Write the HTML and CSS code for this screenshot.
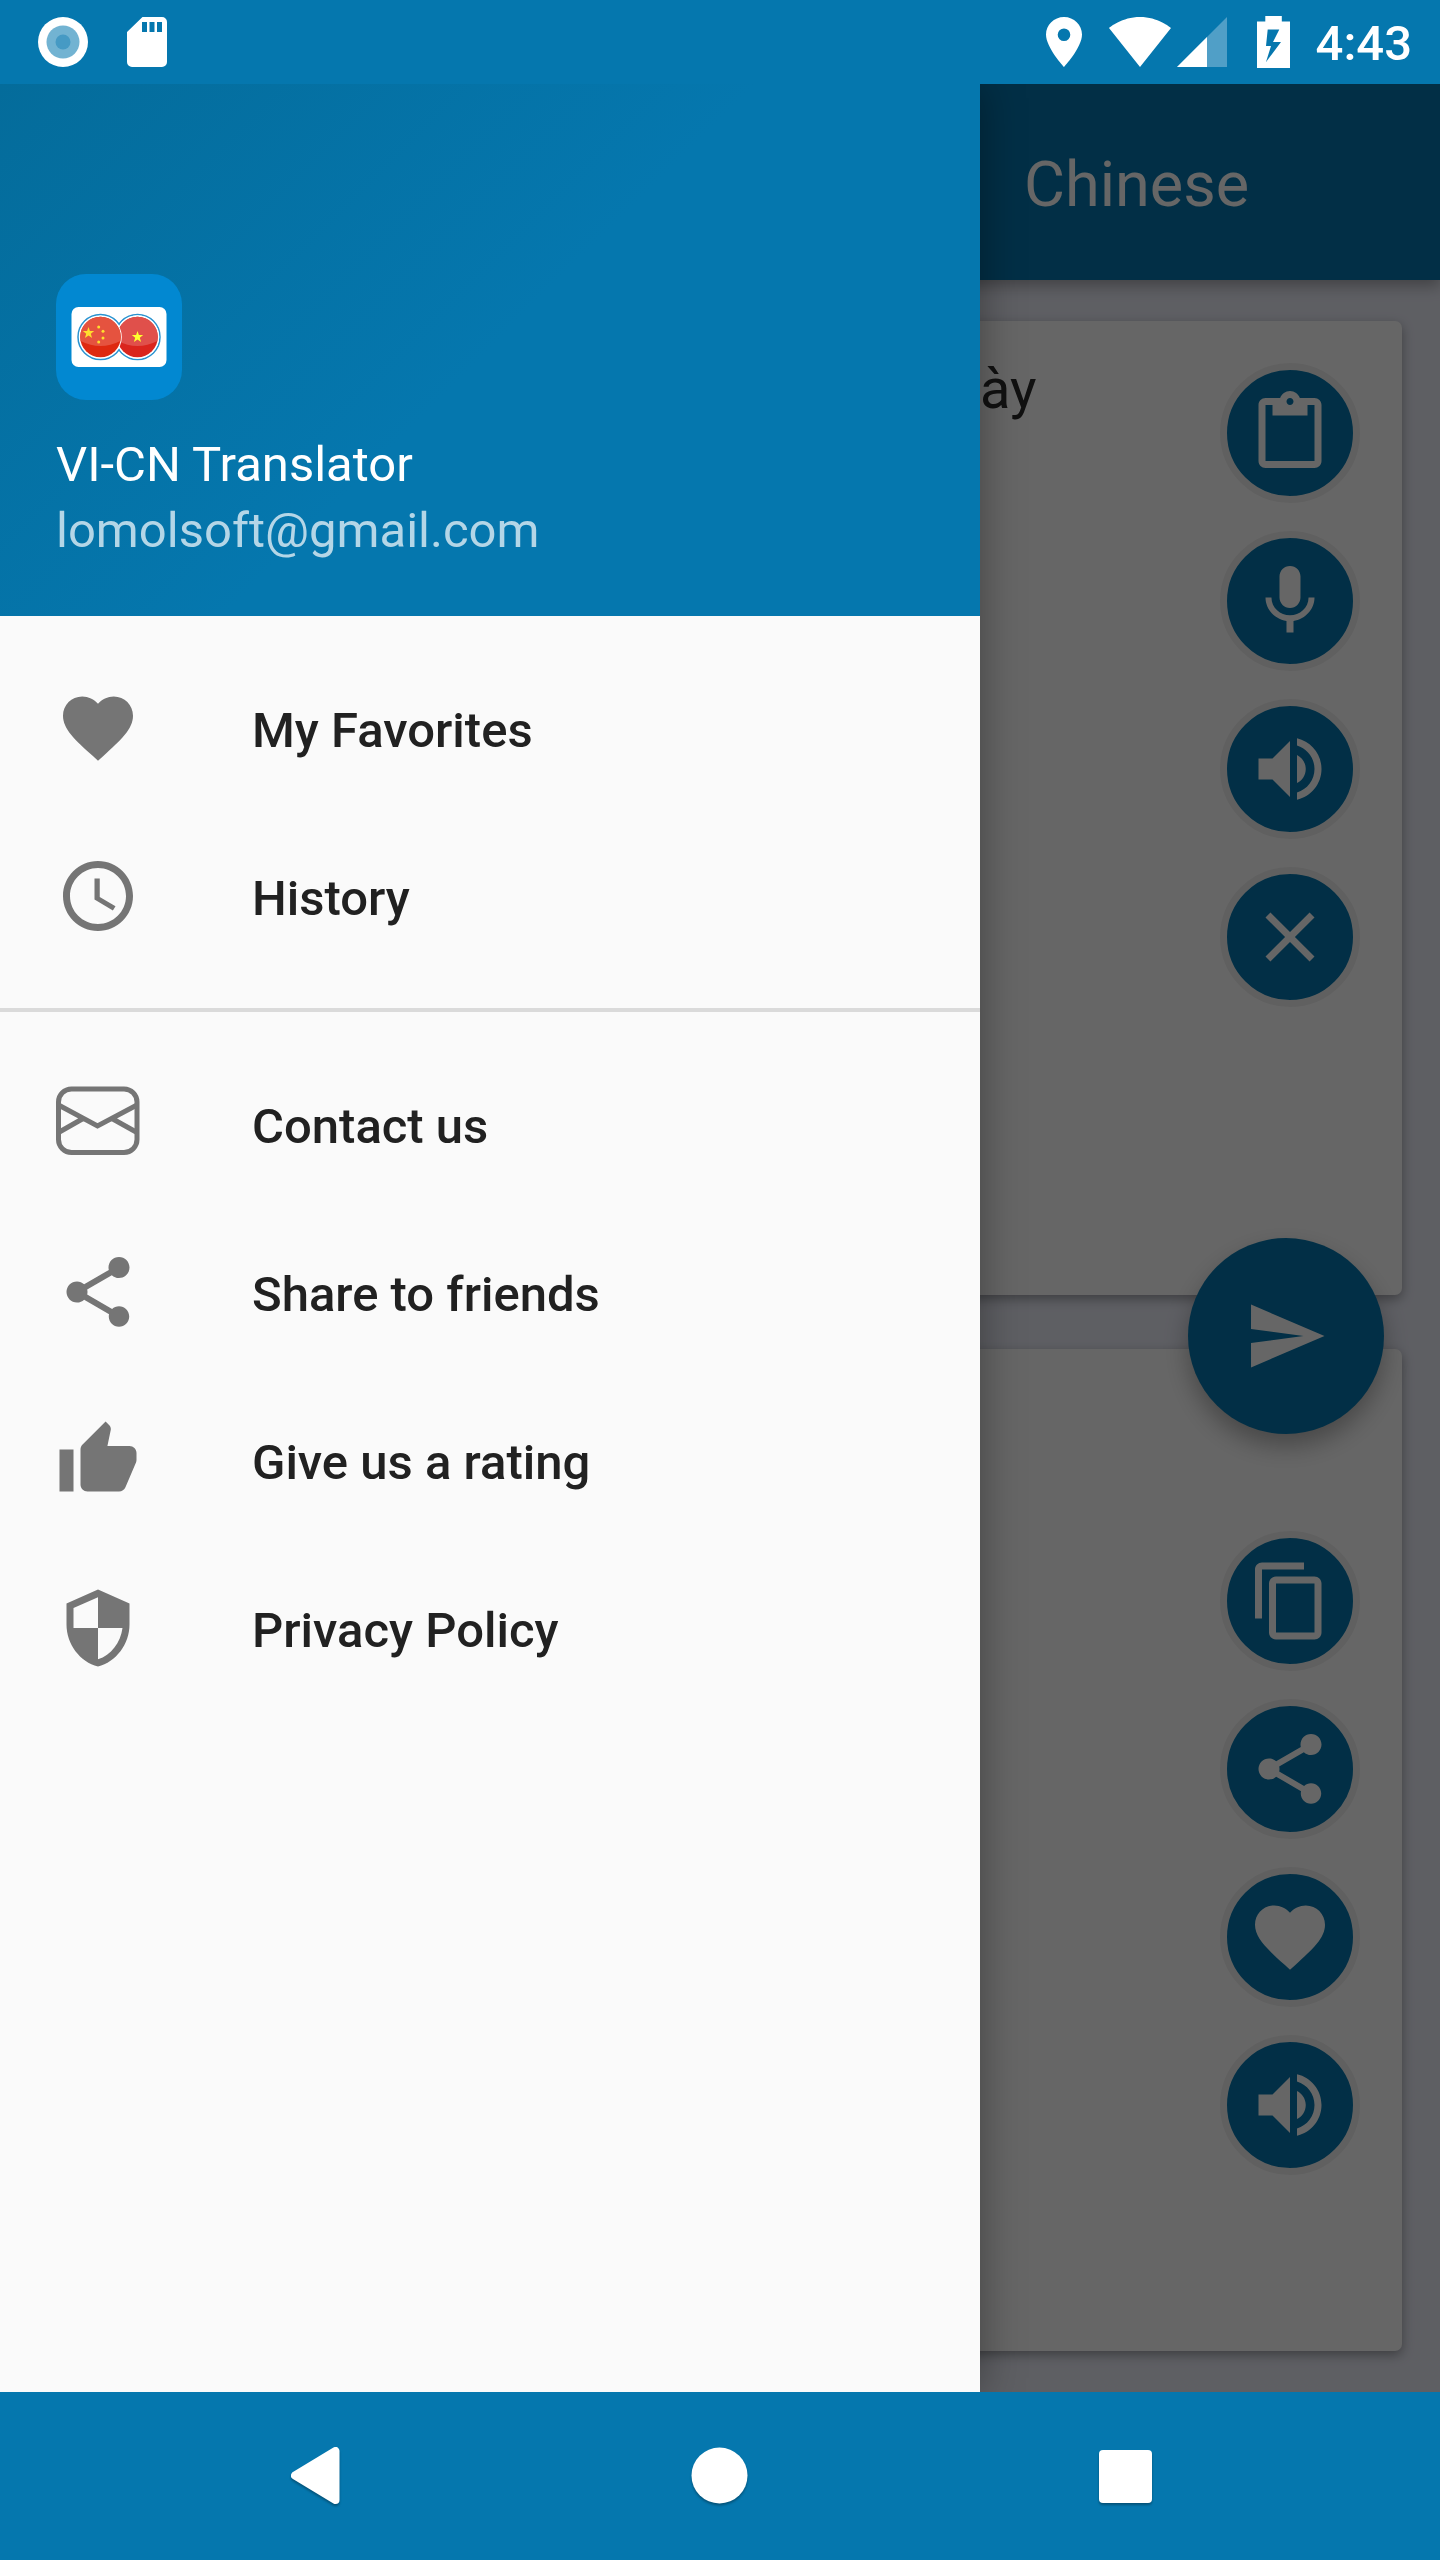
FILE: index.html
```html
<!DOCTYPE html>
<html lang="en">
<head>
<meta charset="utf-8">
<meta name="viewport" content="width=device-width, initial-scale=1">
<title>VI-CN Translator</title>
<link rel="stylesheet" href="styles.css">
</head>
<body>
<svg class="sprite" aria-hidden="true">
  <symbol id="heart" viewBox="0 0 24 24"><path d="M12 21.35l-1.45-1.32C5.4 15.36 2 12.28 2 8.5 2 5.42 4.42 3 7.5 3c1.74 0 3.41.81 4.5 2.09C13.09 3.81 14.76 3 16.5 3 19.58 3 22 5.42 22 8.5c0 3.78-3.4 6.86-8.55 11.54L12 21.35z"/></symbol>
  <symbol id="share" viewBox="0 0 24 24"><path d="M18 16.08c-.76 0-1.44.3-1.96.77L8.91 12.7c.05-.23.09-.46.09-.7s-.04-.47-.09-.7l7.05-4.11c.54.5 1.25.81 2.04.81 1.66 0 3-1.34 3-3s-1.34-3-3-3-3 1.34-3 3c0 .24.04.47.09.7L8.04 9.81C7.5 9.31 6.79 9 6 9c-1.66 0-3 1.34-3 3s1.34 3 3 3c.79 0 1.5-.31 2.04-.81l7.12 4.16c-.05.21-.08.43-.08.65 0 1.61 1.31 2.92 2.92 2.92s2.92-1.31 2.92-2.92-1.31-2.92-2.92-2.92z"/></symbol>
  <symbol id="volume" viewBox="0 0 24 24"><path d="M3 9v6h4l5 5V4L7 9H3zm13.5 3c0-1.77-1.02-3.29-2.5-4.03v8.05c1.48-.73 2.5-2.25 2.5-4.02zM14 3.23v2.06c2.89.86 5 3.54 5 6.71s-2.11 5.85-5 6.71v2.06c4.01-.91 7-4.49 7-8.77s-2.99-7.86-7-8.77z"/></symbol>
</svg>
<div class="phone">
  <header class="status">
    <div class="status-left">
      <svg width="50" height="50" viewBox="0 0 50 50" aria-hidden="true"><circle cx="25" cy="25" r="25" fill="#fff"/><circle cx="25" cy="25" r="16.5" fill="#72b3d2"/><circle cx="25" cy="25" r="7.5" fill="#469ac4"/></svg>
      <svg width="40" height="50" viewBox="0 0 40 50" aria-hidden="true"><path fill="#fff" fill-rule="evenodd" d="M15.500 0H35a5 5 0 0 1 5 5v40a5 5 0 0 1-5 5H5a5 5 0 0 1-5-5V15zM15 5v10h5V5zm7.500 0v10h5V5zM30 5v10h5V5z"/></svg>
    </div>
    <div class="status-right">
      <svg width="39" height="50" viewBox="0 0 39 50" aria-hidden="true"><path fill="#fff" fill-rule="evenodd" d="M18 0C8 0 0 8 0 17.500 0 30.600 18 50 18 50s18-19.400 18-32.500C36 8 28 0 18 0zm0 24a6.300 6.300 0 1 1 0-12.600 6.300 6.300 0 0 1 0 12.600z"/></svg>
      <div class="signals">
        <svg width="62" height="50" viewBox="0 0 62 50" aria-hidden="true"><path fill="#fff" d="M31 50L62 11C61 10.200 49 0 31 0S1 10.200 0 11z"/></svg>
        <svg width="50" height="50" viewBox="0 0 50 50" aria-hidden="true"><path fill="#509fc7" d="M50 0v50H0z"/><path fill="#fff" d="M30 20v30H0z"/></svg>
      </div>
      <svg width="39" height="52" viewBox="0 0 39 52" aria-hidden="true"><path fill="#fff" fill-rule="evenodd" d="M6 5.500h8.300V0h16.500v5.500H39V52H6zM16.700 13.500L15 30h5L15 46 30 26h-8L28.300 13.500z"/></svg>
      <span class="time">4:43</span>
    </div>
  </header>

  <div class="stage">
    <main class="app">
      <div class="toolbar"><h1 class="language">Chinese</h1></div>
      <div class="cards">
        <section class="card card-source">
          <textarea class="source" aria-label="Text to translate">ày</textarea>
          <div class="actions">
            <button class="round" aria-label="Paste"><svg class="icon" viewBox="0 0 24 24"><path d="M19 2h-4.180C14.400.84 13.300 0 12 0c-1.300 0-2.400.84-2.820 2H5c-1.100 0-2 .9-2 2v16c0 1.100.9 2 2 2h14c1.100 0 2-.9 2-2V4c0-1.100-.9-2-2-2zm-7 0c.55 0 1 .45 1 1s-.45 1-1 1-1-.45-1-1 .45-1 1-1zm7 18H5V4h2v3h10V4h2v16z"/></svg></button>
            <button class="round" aria-label="Speak"><svg class="icon" viewBox="0 0 24 24"><path d="M12 14c1.660 0 2.990-1.340 2.990-3L15 5c0-1.660-1.340-3-3-3S9 3.340 9 5v6c0 1.660 1.340 3 3 3zm5.300-3c0 3-2.540 5.100-5.300 5.100S6.700 14 6.700 11H5c0 3.410 2.720 6.230 6 6.720V21h2v-3.280c3.280-.48 6-3.300 6-6.720h-1.700z"/></svg></button>
            <button class="round" aria-label="Listen"><svg class="icon"><use href="#volume"/></svg></button>
            <button class="round" aria-label="Clear"><svg class="icon" viewBox="0 0 24 24"><path d="M19 6.410L17.590 5 12 10.590 6.410 5 5 6.410 10.590 12 5 17.590 6.410 19 12 13.410 17.590 19 19 17.590 13.410 12z"/></svg></button>
          </div>
        </section>
        <section class="card card-result">
          <button class="send" aria-label="Translate"><svg class="icon" viewBox="0 0 24 24"><path d="M2.010 21L23 12 2.010 3 2 10l15 2-15 2z"/></svg></button>
          <div class="actions">
            <button class="round" aria-label="Copy"><svg class="icon" viewBox="0 0 24 24"><path d="M16 1H4c-1.100 0-2 .9-2 2v14h2V3h12V1zm3 4H8c-1.100 0-2 .9-2 2v14c0 1.100.9 2 2 2h11c1.100 0 2-.9 2-2V7c0-1.100-.9-2-2-2zm0 16H8V7h11v14z"/></svg></button>
            <button class="round" aria-label="Share"><svg class="icon"><use href="#share"/></svg></button>
            <button class="round" aria-label="Favorite"><svg class="icon"><use href="#heart"/></svg></button>
            <button class="round" aria-label="Listen to translation"><svg class="icon"><use href="#volume"/></svg></button>
          </div>
        </section>
      </div>
    </main>
    <div class="scrim"></div>
    <aside class="drawer">
      <div class="profile">
        <svg class="logo" viewBox="0 0 126 126" aria-hidden="true">
          <rect width="126" height="126" rx="30" fill="#0288d1"/>
          <rect x="15.500" y="33" width="95" height="60" rx="7" fill="#fff"/>
          <circle cx="81.500" cy="63" r="22.500" fill="none" stroke="#2a93d0" stroke-width="1.500"/>
          <circle cx="44.500" cy="63" r="22.500" fill="#fff" stroke="#2a93d0" stroke-width="1.500"/>
          <circle cx="81.500" cy="63" r="21.700" fill="#fff"/>
          <circle cx="81.500" cy="63" r="20.300" fill="#da251d"/>
          <path d="M61.600 67a20.300 20.300 0 1 1 39.800 0Q81.500 77 61.600 67z" fill="#e0504b"/>
          <circle cx="44.500" cy="63" r="21.300" fill="#fff"/>
          <circle cx="44.500" cy="63" r="20.300" fill="#de2910"/>
          <path d="M24.600 67a20.300 20.300 0 1 1 39.800 0Q44.500 77 24.600 67z" fill="#e5533f"/>
          <path d="M32.500 53l1.400 4.100h4.300l-3.400 2.600 1.300 4.200-3.600-2.500-3.600 2.500 1.300-4.200-3.400-2.600h4.300z" fill="#ffde2e"/>
          <path d="M81.500 57l1.400 4.100h4.300l-3.400 2.600 1.300 4.200-3.600-2.500-3.600 2.500 1.300-4.200-3.400-2.600h4.300z" fill="#ffff2e"/>
          <g fill="#ffde2e"><circle cx="42.700" cy="53" r="1.500"/><circle cx="47" cy="57.300" r="1.500"/><circle cx="47" cy="64" r="1.500"/><circle cx="42.700" cy="68" r="1.500"/></g>
        </svg>
        <div class="name">VI-CN Translator</div>
        <div class="email">lomolsoft@gmail.com</div>
      </div>
      <nav>
        <ul class="menu">
          <li><a class="item" href="#favorites"><svg class="icon"><use href="#heart"/></svg><span class="label">My Favorites</span></a></li>
          <li><a class="item" href="#history"><svg class="icon" viewBox="0 0 24 24"><path d="M11.990 2C6.470 2 2 6.480 2 12s4.470 10 9.990 10C17.520 22 22 17.520 22 12S17.520 2 11.990 2zM12 20c-4.420 0-8-3.580-8-8s3.580-8 8-8 8 3.580 8 8-3.580 8-8 8zM12.500 7H11v6l5.250 3.150.75-1.230-4.500-2.670z"/></svg><span class="label">History</span></a></li>
        </ul>
        <ul class="menu">
          <li><a class="item" href="#contact"><svg class="icon" viewBox="0 0 84 84"><g fill="none" stroke="#757575" stroke-width="5"><rect x="2.500" y="7" width="78.500" height="63.500" rx="13"/><path d="M2.500 23L41.500 44 81 23M28 36L2.500 50.500M55 36L81 50.500"/></g></svg><span class="label">Contact us</span></a></li>
          <li><a class="item" href="#share-app"><svg class="icon"><use href="#share"/></svg><span class="label">Share to friends</span></a></li>
          <li><a class="item" href="#rating"><svg class="icon" viewBox="0 0 24 24"><path d="M1 21h4V9H1v12zm22-11c0-1.100-.9-2-2-2h-6.310l.95-4.570.03-.32c0-.41-.17-.79-.44-1.060L14.170 1 7.590 7.590C7.220 7.950 7 8.450 7 9v10c0 1.100.9 2 2 2h9c.83 0 1.540-.5 1.840-1.220l3.020-7.050c.09-.23.14-.47.14-.73v-2z"/></svg><span class="label">Give us a rating</span></a></li>
          <li><a class="item" href="#privacy"><svg class="icon" viewBox="0 0 24 24"><path d="M12 1L3 5v6c0 5.550 3.840 10.740 9 12 5.160-1.260 9-6.450 9-12V5l-9-4zm0 10.990h7c-.53 4.120-3.280 7.790-7 8.940V12H5V6.300l7-3.110v8.800z"/></svg><span class="label">Privacy Policy</span></a></li>
        </ul>
      </nav>
    </aside>
  </div>

  <footer class="system-nav">
    <button class="key" aria-label="Back"><svg width="58" height="58" viewBox="0 0 58 58"><path d="M49.500 4v49L9 28.500z" fill="#fff" stroke="#fff" stroke-width="8" stroke-linejoin="round"/></svg></button>
    <button class="key" aria-label="Home"><svg width="58" height="58" viewBox="0 0 58 58"><circle cx="28.500" cy="28.500" r="28" fill="#fff"/></svg></button>
    <button class="key" aria-label="Recent apps"><svg width="58" height="58" viewBox="0 0 58 58"><rect x="3" y="3" width="53" height="53" rx="4" fill="#fff"/></svg></button>
  </footer>
</div>
</body>
</html>
```

FILE: styles.css
```css
:root {
  --blue: #0577ae;
  --drawer-width: min(980px, 85vw);
}

* {
  box-sizing: border-box;
}

body {
  margin: 0;
  font-family: Roboto, sans-serif;
}

button {
  padding: 0;
  border: 0;
  background: none;
}

svg {
  display: block;
  flex: none;
}

.sprite {
  position: absolute;
  width: 0;
  height: 0;
}

.icon {
  width: 84px;
  height: 84px;
  fill: currentColor;
}

.phone {
  min-height: 100vh;
  display: flex;
  flex-direction: column;
}

/* System status bar */
.status {
  height: 84px;
  padding: 0 28px 0 38px;
  display: flex;
  justify-content: space-between;
  align-items: center;
  background: var(--blue);
}

.status-left {
  display: flex;
  align-items: center;
  gap: 39px;
}

.status-right {
  display: flex;
  align-items: center;
  gap: 24px;
}

.signals {
  display: flex;
  gap: 6px;
}

.time {
  color: #fff;
  font-size: 49px;
  font-weight: 500;
  line-height: 56px;
  padding: 4px 0 0 2px;
}

/* Translator screen under the drawer */
.stage {
  flex: 1;
  position: relative;
  display: flex;
  overflow: hidden;
}

.app {
  flex: 1;
  min-width: 0;
  display: flex;
  flex-direction: column;
  background: #ebedf8;
}

.toolbar {
  height: 196px;
  padding-left: calc(var(--drawer-width) + 44px);
  display: flex;
  align-items: center;
  background: var(--blue);
  box-shadow: 0 6px 14px rgba(0, 0, 0, 0.3);
}

.language {
  margin: 0;
  padding-top: 6px;
  color: #fff;
  font-size: 63px;
  font-weight: 400;
  line-height: 74px;
}

.cards {
  flex: 1;
  display: flex;
  flex-direction: column;
  gap: 54px;
  padding: 41px 38px;
}

.card {
  position: relative;
  display: flex;
  justify-content: flex-end;
  padding-right: 42px;
  border-radius: 7px;
  background: #fff;
  box-shadow: 0 4px 12px rgba(0, 0, 0, 0.35);
}

.card-source {
  flex: 1 0 800px;
  padding-top: 42px;
}

.card-result {
  flex: 1 0 828px;
  padding-top: 182px;
}

.source {
  flex: 1;
  width: 0;
  min-width: 0;
  margin-top: -7px;
  padding: 0 0 0 calc(var(--drawer-width) - 38px);
  border: 0;
  outline: 0;
  resize: none;
  background: none;
  color: #2b2b2b;
  font: 400 56px/66px Roboto, sans-serif;
}

.actions {
  display: flex;
  flex-direction: column;
  gap: 28px;
}

.round {
  width: 140px;
  height: 140px;
  display: flex;
  justify-content: center;
  align-items: center;
  border: 7px solid #f1f1f1;
  border-radius: 50%;
  background: var(--blue);
  color: #fff;
}

.send {
  position: absolute;
  top: -111px;
  right: 18px;
  width: 196px;
  height: 196px;
  display: flex;
  justify-content: center;
  align-items: center;
  border-radius: 50%;
  background: var(--blue);
  color: #fff;
  box-shadow: 0 12px 24px rgba(0, 0, 0, 0.3);
}

.scrim {
  position: absolute;
  inset: 0;
  background: rgba(0, 0, 0, 0.6);
}

/* Navigation drawer */
.drawer {
  position: absolute;
  top: 0;
  bottom: 0;
  left: 0;
  width: var(--drawer-width);
  background: #fafafa;
  box-shadow: 0 0 40px rgba(0, 0, 0, 0.36);
}

.profile {
  padding: 190px 56px 52px;
  background: linear-gradient(135deg, #046c9b, #0577ae 50%, #0577ae);
  font-size: 49px;
  line-height: 66px;
}

.logo {
  width: 126px;
  height: 126px;
  margin-bottom: 32px;
}

.name {
  color: #fff;
}

.email {
  color: #b4d6e7;
}

.menu {
  margin: 0;
  padding: 28px 0;
  list-style: none;
}

.menu + .menu {
  border-top: 4px solid #dadada;
}

.item {
  height: 168px;
  padding: 0 56px;
  display: flex;
  align-items: center;
  gap: 112px;
  color: #757575;
  text-decoration: none;
}

.label {
  padding-top: 6px;
  color: #212121;
  font-size: 49px;
  font-weight: 500;
  line-height: 58px;
}

/* System navigation bar */
.system-nav {
  height: 168px;
  padding: 0 112px;
  display: grid;
  grid-template-columns: repeat(3, 1fr);
  background: var(--blue);
}

.key {
  display: flex;
  justify-content: center;
  align-items: center;
}

.key svg {
  filter: drop-shadow(0 2px 1px rgba(0, 0, 0, 0.3));
}
```
